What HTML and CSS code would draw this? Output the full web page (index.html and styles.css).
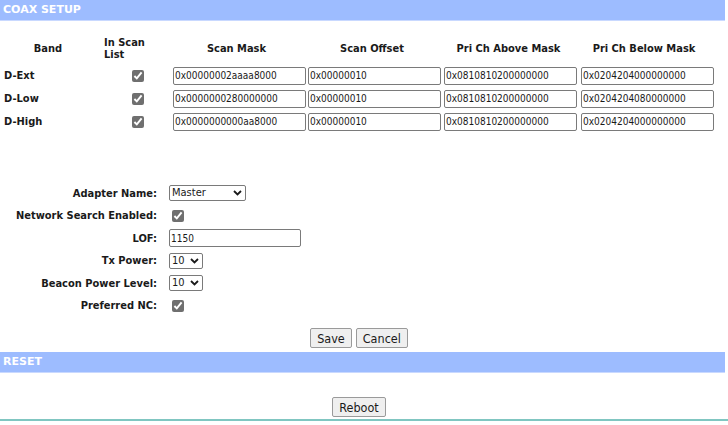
FILE: index.html
```html
<!DOCTYPE html>
<html>
<head>
<meta charset="utf-8">
<link rel="stylesheet" href="styles.css">
</head>
<body>
<div class="bar">COAX SETUP</div>

<div class="scan-grid">
  <div class="th th-band">Band</div>
  <div class="th th-list">In Scan<br>List</div>
  <div class="th">Scan Mask</div>
  <div class="th">Scan Offset</div>
  <div class="th">Pri Ch Above Mask</div>
  <div class="th">Pri Ch Below Mask</div>

  <div class="band">D-Ext</div>
  <div class="chk-cell"><input type="checkbox" class="chk" checked></div>
  <div class="cell"><input class="txt" type="text" value="0x00000002aaaa8000"></div>
  <div class="cell"><input class="txt" type="text" value="0x00000010"></div>
  <div class="cell"><input class="txt" type="text" value="0x0810810200000000"></div>
  <div class="cell"><input class="txt" type="text" value="0x0204204000000000"></div>

  <div class="band">D-Low</div>
  <div class="chk-cell"><input type="checkbox" class="chk" checked></div>
  <div class="cell"><input class="txt" type="text" value="0x0000000280000000"></div>
  <div class="cell"><input class="txt" type="text" value="0x00000010"></div>
  <div class="cell"><input class="txt" type="text" value="0x0810810200000000"></div>
  <div class="cell"><input class="txt" type="text" value="0x0204204080000000"></div>

  <div class="band">D-High</div>
  <div class="chk-cell"><input type="checkbox" class="chk" checked></div>
  <div class="cell"><input class="txt" type="text" value="0x0000000000aa8000"></div>
  <div class="cell"><input class="txt" type="text" value="0x00000010"></div>
  <div class="cell"><input class="txt" type="text" value="0x0810810200000000"></div>
  <div class="cell"><input class="txt" type="text" value="0x0204204000000000"></div>
</div>

<div class="form">
  <div class="lbl">Adapter Name:</div>
  <div class="ctl">
    <span class="sel-wrap">
      <select class="sel sel-wide"><option>Master</option></select>
      <svg class="chev" width="9" height="6" viewBox="0 0 9 6"><path d="M1 1 L4.5 4.5 L8 1" fill="none" stroke="#1a1a1a" stroke-width="1.8"/></svg>
    </span>
  </div>

  <div class="lbl">Network Search Enabled:</div>
  <div class="ctl"><input type="checkbox" class="chk chk-form" checked></div>

  <div class="lbl">LOF:</div>
  <div class="ctl"><input class="txt txt-lof" type="text" value="1150"></div>

  <div class="lbl">Tx Power:</div>
  <div class="ctl">
    <span class="sel-wrap">
      <select class="sel sel-num"><option>10</option></select>
      <svg class="chev" width="9" height="6" viewBox="0 0 9 6"><path d="M1 1 L4.5 4.5 L8 1" fill="none" stroke="#1a1a1a" stroke-width="1.8"/></svg>
    </span>
  </div>

  <div class="lbl">Beacon Power Level:</div>
  <div class="ctl">
    <span class="sel-wrap">
      <select class="sel sel-num"><option>10</option></select>
      <svg class="chev" width="9" height="6" viewBox="0 0 9 6"><path d="M1 1 L4.5 4.5 L8 1" fill="none" stroke="#1a1a1a" stroke-width="1.8"/></svg>
    </span>
  </div>

  <div class="lbl">Preferred NC:</div>
  <div class="ctl"><input type="checkbox" class="chk chk-form" checked></div>
</div>

<div class="actions">
  <button class="btn">Save</button>
  <button class="btn">Cancel</button>
</div>

<div class="bar">RESET</div>

<div class="actions actions-reboot">
  <button class="btn">Reboot</button>
</div>

<div class="rule"></div>
</body>
</html>
```

FILE: styles.css
```css
html, body {
  margin: 0;
  padding: 0;
  background: #ffffff;
}

body {
  font-family: "DejaVu Sans", "Liberation Sans", sans-serif;
  font-stretch: condensed;
  font-size: 11px;
  color: #1a1a1a;
}

.bar {
  width: calc(100% - 3px);
  height: 21px;
  line-height: 20px;
  box-sizing: border-box;
  padding-left: 3px;
  background: #9dbcff;
  border-bottom: 1px solid #c9d9ff;
  color: #ffffff;
  font-weight: bold;
  font-size: 11px;
  font-stretch: normal;
}

.scan-grid {
  display: grid;
  grid-template-columns: 96px 77px 135px 136px 137px 134px;
  grid-template-rows: 30px repeat(3, 23px);
  margin-top: 13px;
  align-items: center;
}

.th {
  font-weight: bold;
  text-align: center;
  padding-right: 8px;
  line-height: 12px;
}

.th-band {
  padding-right: 0;
}

.th-list {
  text-align: left;
  padding-left: 8px;
  padding-right: 0;
}

.band {
  font-weight: bold;
  padding-left: 4px;
}

.chk-cell {
  display: flex;
  justify-content: flex-end;
  padding-right: 29px;
}

.chk {
  width: 12px;
  height: 12px;
  margin: 0;
  accent-color: #6f6f6f;
}

.cell {
  display: flex;
}

.txt {
  width: 133px;
  height: 18px;
  box-sizing: border-box;
  margin: 0;
  padding: 0 1px;
  border: 1px solid #7a7a7a;
  border-radius: 2px;
  font-family: "DejaVu Sans", "Liberation Sans", sans-serif;
  font-stretch: condensed;
  font-size: 10px;
  color: #1a1a1a;
  background: #ffffff;
}

.form {
  display: grid;
  grid-template-columns: 157px auto;
  column-gap: 12px;
  grid-auto-rows: 22.5px;
  align-items: center;
  margin-top: 49px;
}

.lbl {
  font-weight: bold;
  text-align: right;
}

.ctl {
  display: flex;
  align-items: center;
}

.chk-form {
  margin-left: 3px;
}

.txt-lof {
  width: 132px;
}

.sel-wrap {
  position: relative;
  display: inline-flex;
}

.sel {
  -webkit-appearance: none;
  appearance: none;
  height: 16px;
  box-sizing: border-box;
  margin: 0;
  padding: 0 0 0 2px;
  border: 1px solid #7a7a7a;
  border-radius: 2px;
  font-family: "DejaVu Sans", "Liberation Sans", sans-serif;
  font-stretch: condensed;
  font-size: 11px;
  line-height: 14px;
  color: #1a1a1a;
  background: #ffffff;
}

.chev {
  position: absolute;
  right: 4px;
  top: 5px;
  pointer-events: none;
}

.sel-wide {
  width: 77px;
}

.sel-num {
  width: 34px;
}

.actions {
  display: flex;
  justify-content: center;
  gap: 4px;
  padding-right: 10px;
  margin-top: 11px;
  margin-bottom: 4px;
}

.actions-reboot {
  margin-top: 24px;
  margin-bottom: 2px;
}

.btn {
  height: 20px;
  margin: 0;
  padding: 0 6px;
  border: 1px solid #9a9a9a;
  border-radius: 2px;
  background: #efefef;
  font-family: "DejaVu Sans", "Liberation Sans", sans-serif;
  font-stretch: condensed;
  font-size: 12.5px;
  color: #1a1a1a;
}

.rule {
  height: 2px;
  background: #80c6c1;
}
```
